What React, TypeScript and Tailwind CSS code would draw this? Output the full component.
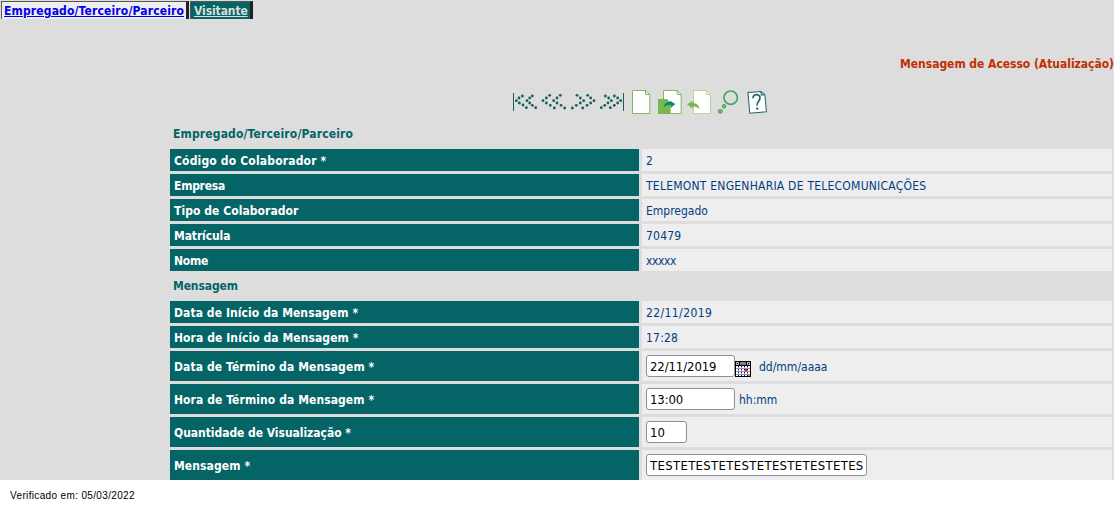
import React from "react";

type RowProps = { label: string; track?: string; tall?: boolean; children: React.ReactNode };

function Row({ label, track = "", tall = false, children }: RowProps) {
  return (
    <div className={`flex gap-[3px] ${tall ? "h-[30px]" : "h-[22px]"}`}>
      <div className="flex w-[469px] items-center bg-[#046466] pt-[2px] pl-1 font-bold text-white">
        <span className={track}>{label}</span>
      </div>
      <div className="flex w-[470px] items-center bg-[#eeeeee] pl-1 text-[#003d80]">{children}</div>
    </div>
  );
}

function Section({ track, children }: { track: string; children: React.ReactNode }) {
  return (
    <h2 className={`flex h-6 items-center pt-px pl-[3px] font-bold text-[#046466] ${track}`}>{children}</h2>
  );
}

const inputClass =
  "h-[22px] rounded-[3px] border border-[#8f8f9d] bg-white px-[3px] text-[13px] text-black outline-none";

// Dots of the first / previous / next / last arrows, three units per pixel.
const arrowDots = [
  [52, 48], [42, 54], [34, 62], [43, 69], [54, 75], [64, 83],
  [82, 48], [74, 54], [66, 62], [74, 69], [82, 76], [92, 83],
  [134, 46], [124, 54], [114, 62], [124, 69], [136, 76], [148, 84],
  [166, 46], [156, 54], [146, 62], [156, 69], [168, 76], [179, 84],
  [216, 46], [226, 54], [236, 62], [226, 69], [214, 76], [202, 84],
  [248, 46], [257, 54], [267, 62], [257, 69], [246, 76], [233, 84],
  [301, 48], [311, 54], [319, 62], [309, 69], [299, 76], [289, 83],
  [328, 48], [338, 54], [347, 62], [338, 69], [328, 76], [316, 83],
];

function NavigationArrows() {
  return (
    <svg width="116" height="24" viewBox="24 30 348 72" fill="#14605c">
      <path d="M24 39h3v54h-3zM354 39h3v54h-3z" />
      {arrowDots.map(([x, y]) => (
        <circle key={`${x}-${y}`} cx={x} cy={y} r="4.200" />
      ))}
    </svg>
  );
}

function ActionIcons() {
  return (
    <svg width="145" height="25" viewBox="15 30 435 75" fill="none" strokeWidth="3">
      <path d="M22.500 31.500h40l12 12v57h-52z" fill="#fff" stroke="#80b860" />
      <path d="M61.500 31.500v12h12" stroke="#80b860" />

      <path d="M115.500 31.500h41l12 12v57h-53z" fill="#fff" stroke="#80b860" />
      <path d="M156.500 31.500v12h12" stroke="#80b860" />
      <path d="M99 57h27l11 12v33H99z" fill="#78b850" />
      <path d="M117 82c1-12 8-17 18-17v-3l16 10-14 12v-9c-9-1-14 1-20 7z" fill="#088870" />

      <path d="M205.500 31.500h39l12 12v57h-51z" fill="#fff" stroke="#b4d89c" />
      <path d="M244.500 31.500v12h12" stroke="#b4d89c" />
      <path d="M186 73l17-11v7c12 0 20 7 20 19-6-7-12-9-20-8v6z" fill="#78b850" />

      <circle cx="317" cy="53" r="20" stroke="#40a868" strokeWidth="5" />
      <circle cx="297" cy="79" r="5.500" fill="#78b850" stroke="#40a868" />
      <circle cx="286" cy="94" r="6" fill="#78b850" stroke="#40a868" />

      <g transform="rotate(-5 396 66)">
        <path d="M371.500 35.500h39l11 11v51h-50z" fill="#fff" stroke="#1c6462" />
        <path d="M410.500 35.500v11h11" stroke="#1c6462" />
        <path d="M385 54c1-14 22-13 21 0 0 9-11 12-11 23" stroke="#1c6462" strokeWidth="5" />
        <circle cx="395" cy="86" r="3.500" fill="#1c6462" />
      </g>
    </svg>
  );
}

function CalendarIcon() {
  const cells = [0, 1, 2, 3].flatMap((r) => [0, 1, 2, 3].map((c) => [c, r]));
  return (
    <svg className="mt-[5px]" width="16" height="16" viewBox="0 0 16 16" shapeRendering="crispEdges">
      <rect width="16" height="16" fill="#000" />
      <path d="M1 1h3v3H1zM12 1h3v3h-3z" fill="#b0b0b0" />
      <path d="M5 1h6v3H5z" fill="#808080" />
      <path d="M2 2h1v1H2zM13 2h1v1h-1z" fill="#000" />
      <rect x="1" y="5" width="14" height="10" fill="#999" />
      {cells.map(([c, r]) => (
        <g key={`${c}-${r}`}>
          <rect x={1 + c * 3} y={5 + r * 3} width="2" height={r === 3 ? 1 : 2} fill="#fff" />
          <rect x={3 + c * 3} y={5 + r * 3} width="1" height="1" fill="#0000e0" />
        </g>
      ))}
      <path d="M13 5h2v2h-2zM13 8h2v2h-2zM13 11h2v2h-2z" fill="#fff" />
      <path d="M10 8h2v2h-2z" fill="#f00" />
    </svg>
  );
}

export default function App() {
  return (
    <div className="h-[510px] overflow-hidden bg-white font-['DejaVu_Sans_Condensed','DejaVu_Sans',sans-serif] text-[12px] leading-[15px]">
      <div className="flex h-[480px] flex-col bg-[#dddddd]">
        <nav className="flex h-[19px] gap-px pt-px font-bold">
          <a className="ml-px w-[188px] border-t border-r-[3px] border-l border-[#555] border-r-[#222] bg-[#eee] pt-[2px] pl-[2px] tracking-[0.15px] text-[#0000ee] underline">Empregado/Terceiro/Parceiro</a>
          <a className="w-[63px] border-t border-r-[3px] border-l border-[#555] border-r-[#222] bg-[#046466] pt-[2px] pl-[3px] tracking-[-0.1px] text-[#ddd] underline">Visitante</a>
        </nav>
        <h1 className="mt-[38px] h-[33px] text-right font-bold tracking-[-0.03px] text-[#c03000]">Mensagem de Acesso (Atualização)</h1>
        <div className="flex h-6 gap-px pl-[513px]">
          <NavigationArrows />
          <ActionIcons />
        </div>
        <main className="mt-2 ml-[170px] flex flex-col gap-[3px]">
          <Section track="tracking-[0.15px]">Empregado/Terceiro/Parceiro</Section>
          <Row label="Código do Colaborador *" track="tracking-[0.17px]">
            <span className="pt-[2px]">2</span>
          </Row>
          <Row label="Empresa" track="tracking-[-0.25px]">
            <span className="pt-[2px] tracking-[0.24px]">TELEMONT ENGENHARIA DE TELECOMUNICAÇÕES</span>
          </Row>
          <Row label="Tipo de Colaborador" track="tracking-[0.06px]">
            <span className="pt-[2px]">Empregado</span>
          </Row>
          <Row label="Matrícula" track="tracking-[-0.1px]">
            <span className="pt-[2px] tracking-[0.2px]">70479</span>
          </Row>
          <Row label="Nome" track="tracking-[-0.2px]">
            <span className="pt-[2px] tracking-[-0.4px]">xxxxx</span>
          </Row>
          <Section track="tracking-[-0.1px]">Mensagem</Section>
          <Row label="Data de Início da Mensagem *" track="tracking-[0.08px]">
            <span className="pt-[2px] tracking-[0.4px]">22/11/2019</span>
          </Row>
          <Row label="Hora de Início da Mensagem *" track="tracking-[0.08px]">
            <span className="pt-[2px] tracking-[0.2px]">17:28</span>
          </Row>
          <Row tall label="Data de Término da Mensagem *" track="tracking-[0.1px]">
            <input className={`${inputClass} w-[89px] pt-px tracking-[-0.1px]`} defaultValue="22/11/2019" />
            <CalendarIcon />
            <span className="ml-2 pt-[2px]">dd/mm/aaaa</span>
          </Row>
          <Row tall label="Hora de Término da Mensagem *" track="tracking-[0.08px]">
            <input className={`${inputClass} w-[89px] pt-px tracking-[-0.1px]`} defaultValue="13:00" />
            <span className="ml-1 pt-[2px]">hh:mm</span>
          </Row>
          <Row tall label="Quantidade de Visualização *" track="tracking-[-0.04px]">
            <input className={`${inputClass} w-[41px] pt-px`} defaultValue="10" />
          </Row>
          <Row tall label="Mensagem *" track="tracking-[0.1px]">
            <input className={`${inputClass} w-[221px] pt-px tracking-[0.33px]`} defaultValue="TESTETESTETESTETESTETESTETES" />
          </Row>
        </main>
      </div>
      <footer className="pt-2 pl-[10px] font-['Liberation_Sans',sans-serif] text-[10px] tracking-[0.35px] text-black">Verificado em: 05/03/2022</footer>
    </div>
  );
}
